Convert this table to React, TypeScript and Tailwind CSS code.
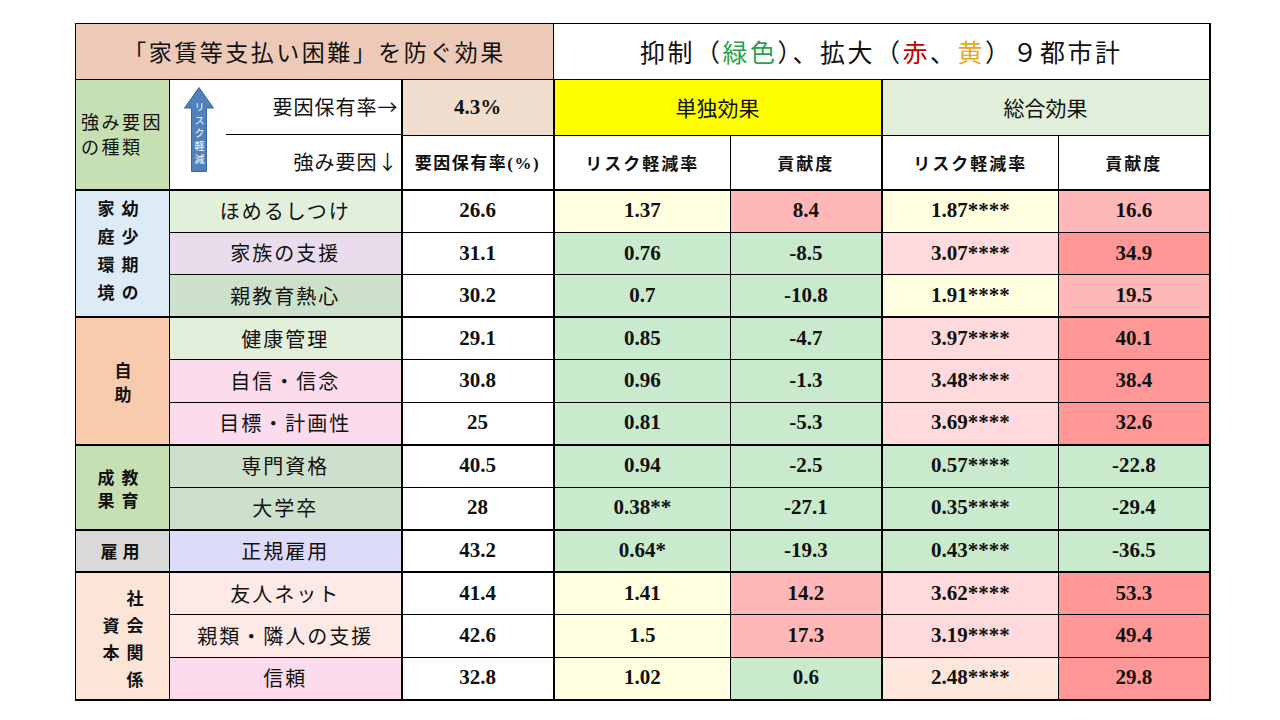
import React from 'react';

const jp = "font-['Noto_Sans_CJK_JP',sans-serif]";
const num = "font-['Liberation_Serif','Times_New_Roman',serif]";

// cell fills
const Y = 'bg-[#ffffdf]';
const G = 'bg-[#c9eacd]';
const P = 'bg-[#ffb7b7]';
const LP = 'bg-[#ffdadc]';
const DP = 'bg-[#ff9797]';
const PE = 'bg-[#fde6dc]';

type Row = {
  name: string;
  nameBg: string;
  rate: string;
  a: string;
  aBg: string;
  b: string;
  bBg: string;
  c: string;
  cBg: string;
  d: string;
  dBg: string;
};

type Group = {
  lines: string[];
  bg: string;
  labelClass: string;
  horizontal?: boolean;
  rows: Row[];
};

const GROUPS: Group[] = [
  {
    lines: ['幼少期の', '家庭環境'],
    bg: 'bg-[#ddebf7]',
    labelClass: 'tracking-[11px] translate-y-[5px] mr-[10px]',
    rows: [
      { name: 'ほめるしつけ', nameBg: 'bg-[#e2efda]', rate: '26.6', a: '1.37', aBg: Y, b: '8.4', bBg: P, c: '1.87****', cBg: Y, d: '16.6', dBg: P },
      { name: '家族の支援', nameBg: 'bg-[#e9dcec]', rate: '31.1', a: '0.76', aBg: G, b: '-8.5', bBg: G, c: '3.07****', cBg: LP, d: '34.9', dBg: DP },
      { name: '親教育熱心', nameBg: 'bg-[#cde0cb]', rate: '30.2', a: '0.7', aBg: G, b: '-10.8', bBg: G, c: '1.91****', cBg: Y, d: '19.5', dBg: P },
    ],
  },
  {
    lines: ['自助'],
    bg: 'bg-[#f8cbad]',
    labelClass: 'tracking-[7px] translate-y-[8px]',
    rows: [
      { name: '健康管理', nameBg: 'bg-[#e2efda]', rate: '29.1', a: '0.85', aBg: G, b: '-4.7', bBg: G, c: '3.97****', cBg: LP, d: '40.1', dBg: DP },
      { name: '自信・信念', nameBg: 'bg-[#fcdcec]', rate: '30.8', a: '0.96', aBg: G, b: '-1.3', bBg: G, c: '3.48****', cBg: LP, d: '38.4', dBg: DP },
      { name: '目標・計画性', nameBg: 'bg-[#fcdcec]', rate: '25', a: '0.81', aBg: G, b: '-5.3', bBg: G, c: '3.69****', cBg: LP, d: '32.6', dBg: DP },
    ],
  },
  {
    lines: ['教育', '成果'],
    bg: 'bg-[#c6e0b4]',
    labelClass: 'tracking-[6px] translate-y-[8px] mr-[10px]',
    rows: [
      { name: '専門資格', nameBg: 'bg-[#cde0cb]', rate: '40.5', a: '0.94', aBg: G, b: '-2.5', bBg: G, c: '0.57****', cBg: G, d: '-22.8', dBg: G },
      { name: '大学卒', nameBg: 'bg-[#cde0cb]', rate: '28', a: '0.38**', aBg: G, b: '-27.1', bBg: G, c: '0.35****', cBg: G, d: '-29.4', dBg: G },
    ],
  },
  {
    lines: ['雇用'],
    bg: 'bg-[#d9d9d9]',
    labelClass: 'tracking-[5px]',
    horizontal: true,
    rows: [
      { name: '正規雇用', nameBg: 'bg-[#dcdcfa]', rate: '43.2', a: '0.64*', aBg: G, b: '-19.3', bBg: G, c: '0.43****', cBg: G, d: '-36.5', dBg: G },
    ],
  },
  {
    lines: ['社会関係', '資本'],
    bg: 'bg-[#fce4d6]',
    labelClass: 'tracking-[10px] translate-y-[11px]',
    rows: [
      { name: '友人ネット', nameBg: 'bg-[#fde9e5]', rate: '41.4', a: '1.41', aBg: Y, b: '14.2', bBg: P, c: '3.62****', cBg: LP, d: '53.3', dBg: DP },
      { name: '親類・隣人の支援', nameBg: 'bg-[#fde9e5]', rate: '42.6', a: '1.5', aBg: Y, b: '17.3', bBg: P, c: '3.19****', cBg: LP, d: '49.4', dBg: DP },
      { name: '信頼', nameBg: 'bg-[#fcdcec]', rate: '32.8', a: '1.02', aBg: Y, b: '0.6', bBg: G, c: '2.48****', cBg: PE, d: '29.8', dBg: DP },
    ],
  },
];

const cell = 'border border-black p-0 text-center align-middle';

function RiskArrow() {
  return (
    <div className="relative w-[30px] h-[85px]">
      <svg width="30" height="85" viewBox="0 0 30 85">
        <polygon
          points="15,0.5 29.5,21 22.5,21 22.5,84.5 7.5,84.5 7.5,21 0.5,21"
          fill="#4f81bd"
          stroke="#3a659a"
          strokeWidth="1"
        />
      </svg>
      <div className={`absolute left-[9px] top-[15px] [writing-mode:vertical-rl] text-[10px] leading-[12px] tracking-[3px] text-white ${jp}`}>
        リスク軽減
      </div>
    </div>
  );
}

export default function App() {
  return (
    <div className="w-[1280px] h-[720px] bg-white pt-[23px] pl-[75px] text-[#111]">
      <table className="w-[1134px] table-fixed border-collapse border-l border-t border-r-2 border-b-2 border-black">
        <colgroup>
          <col className="w-[94px]" />
          <col className="w-[232px]" />
          <col className="w-[152px]" />
          <col className="w-[177px]" />
          <col className="w-[151px]" />
          <col className="w-[177px]" />
          <col className="w-[151px]" />
        </colgroup>
        <tbody>
          {/* Title row */}
          <tr className="h-[56px]">
            <td colSpan={3} className={`${cell} bg-[#edcab8] text-[23px] tracking-[2.5px] ${jp}`}>
              「家賃等支払い困難」を防ぐ効果
            </td>
            <td colSpan={4} className={`${cell} bg-white text-[25px] tracking-[2.5px] ${jp}`}>
              抑制（<span className="text-[#2ba14b]">緑色</span>）、拡大（
              <span className="text-[#c00000]">赤</span>、<span className="text-[#e8a820]">黄</span>）９都市計
            </td>
          </tr>

          {/* Header rows */}
          <tr className="h-[56px]">
            <td rowSpan={2} className={`${cell} border-b-2 bg-[#c6e0b4] text-left pl-[5px] text-[18px] leading-[25px] tracking-[2.5px] ${jp}`}>
              強み要因
              <br />
              の種類
            </td>
            <td rowSpan={2} className={`${cell} border-b-2 border-r-2 bg-white`}>
              <div className="flex h-[108px]">
                <div className="w-[56px] pl-[14px] pt-[7px]">
                  <RiskArrow />
                </div>
                <div className={`flex-1 flex flex-col text-[20px] tracking-[1px] ${jp}`}>
                  <div className="h-[55px] flex items-center justify-end pr-[2px] border-b border-black">要因保有率→</div>
                  <div className="flex-1 flex items-center justify-end pr-[2px]">強み要因↓</div>
                </div>
              </div>
            </td>
            <td className={`${cell} border-r-2 bg-[#f1decf] text-[21px] font-bold ${num}`}>4.3%</td>
            <td colSpan={2} className={`${cell} border-r-2 bg-[#ffff00] text-[21px] ${jp}`}>単独効果</td>
            <td colSpan={2} className={`${cell} bg-[#e2efda] text-[21px] ${jp}`}>総合効果</td>
          </tr>
          <tr className="h-[54px]">
            <td className={`${cell} border-b-2 border-r-2 bg-white text-[17px] font-bold tracking-[1.5px] ${jp}`}>
              要因保有率<span className={num}>(%)</span>
            </td>
            <td className={`${cell} border-b-2 bg-white text-[17px] font-bold tracking-[2px] ${jp}`}>リスク軽減率</td>
            <td className={`${cell} border-b-2 border-r-2 bg-white text-[17px] font-bold tracking-[2px] ${jp}`}>貢献度</td>
            <td className={`${cell} border-b-2 bg-white text-[17px] font-bold tracking-[2px] ${jp}`}>リスク軽減率</td>
            <td className={`${cell} border-b-2 bg-white text-[17px] font-bold tracking-[2px] ${jp}`}>貢献度</td>
          </tr>

          {/* Data rows */}
          {GROUPS.map((g) =>
            g.rows.map((r, i) => {
              const last = i === g.rows.length - 1 ? 'border-b-2' : '';
              return (
                <tr key={r.name} className="h-[42.5px]">
                  {i === 0 && (
                    <td rowSpan={g.rows.length} className={`${cell} border-b-2 ${g.bg} text-[17px] font-bold ${jp}`}>
                      {g.horizontal ? (
                        <span className={g.labelClass}>{g.lines[0]}</span>
                      ) : (
                        <div className={`inline-block [writing-mode:vertical-rl] text-center leading-[24px] ${g.labelClass}`}>
                          {g.lines.map((l, k) => (
                            <React.Fragment key={k}>
                              {k > 0 && <br />}
                              {l}
                            </React.Fragment>
                          ))}
                        </div>
                      )}
                    </td>
                  )}
                  <td className={`${cell} ${last} border-r-2 ${r.nameBg} text-[20px] tracking-[2px] ${jp}`}>{r.name}</td>
                  <td className={`${cell} ${last} border-r-2 bg-white text-[21px] font-bold ${num}`}>{r.rate}</td>
                  <td className={`${cell} ${last} ${r.aBg} text-[21px] font-bold ${num}`}>{r.a}</td>
                  <td className={`${cell} ${last} border-r-2 ${r.bBg} text-[21px] font-bold ${num}`}>{r.b}</td>
                  <td className={`${cell} ${last} ${r.cBg} text-[21px] font-bold ${num}`}>{r.c}</td>
                  <td className={`${cell} ${last} ${r.dBg} text-[21px] font-bold ${num}`}>{r.d}</td>
                </tr>
              );
            })
          )}
        </tbody>
      </table>
    </div>
  );
}
